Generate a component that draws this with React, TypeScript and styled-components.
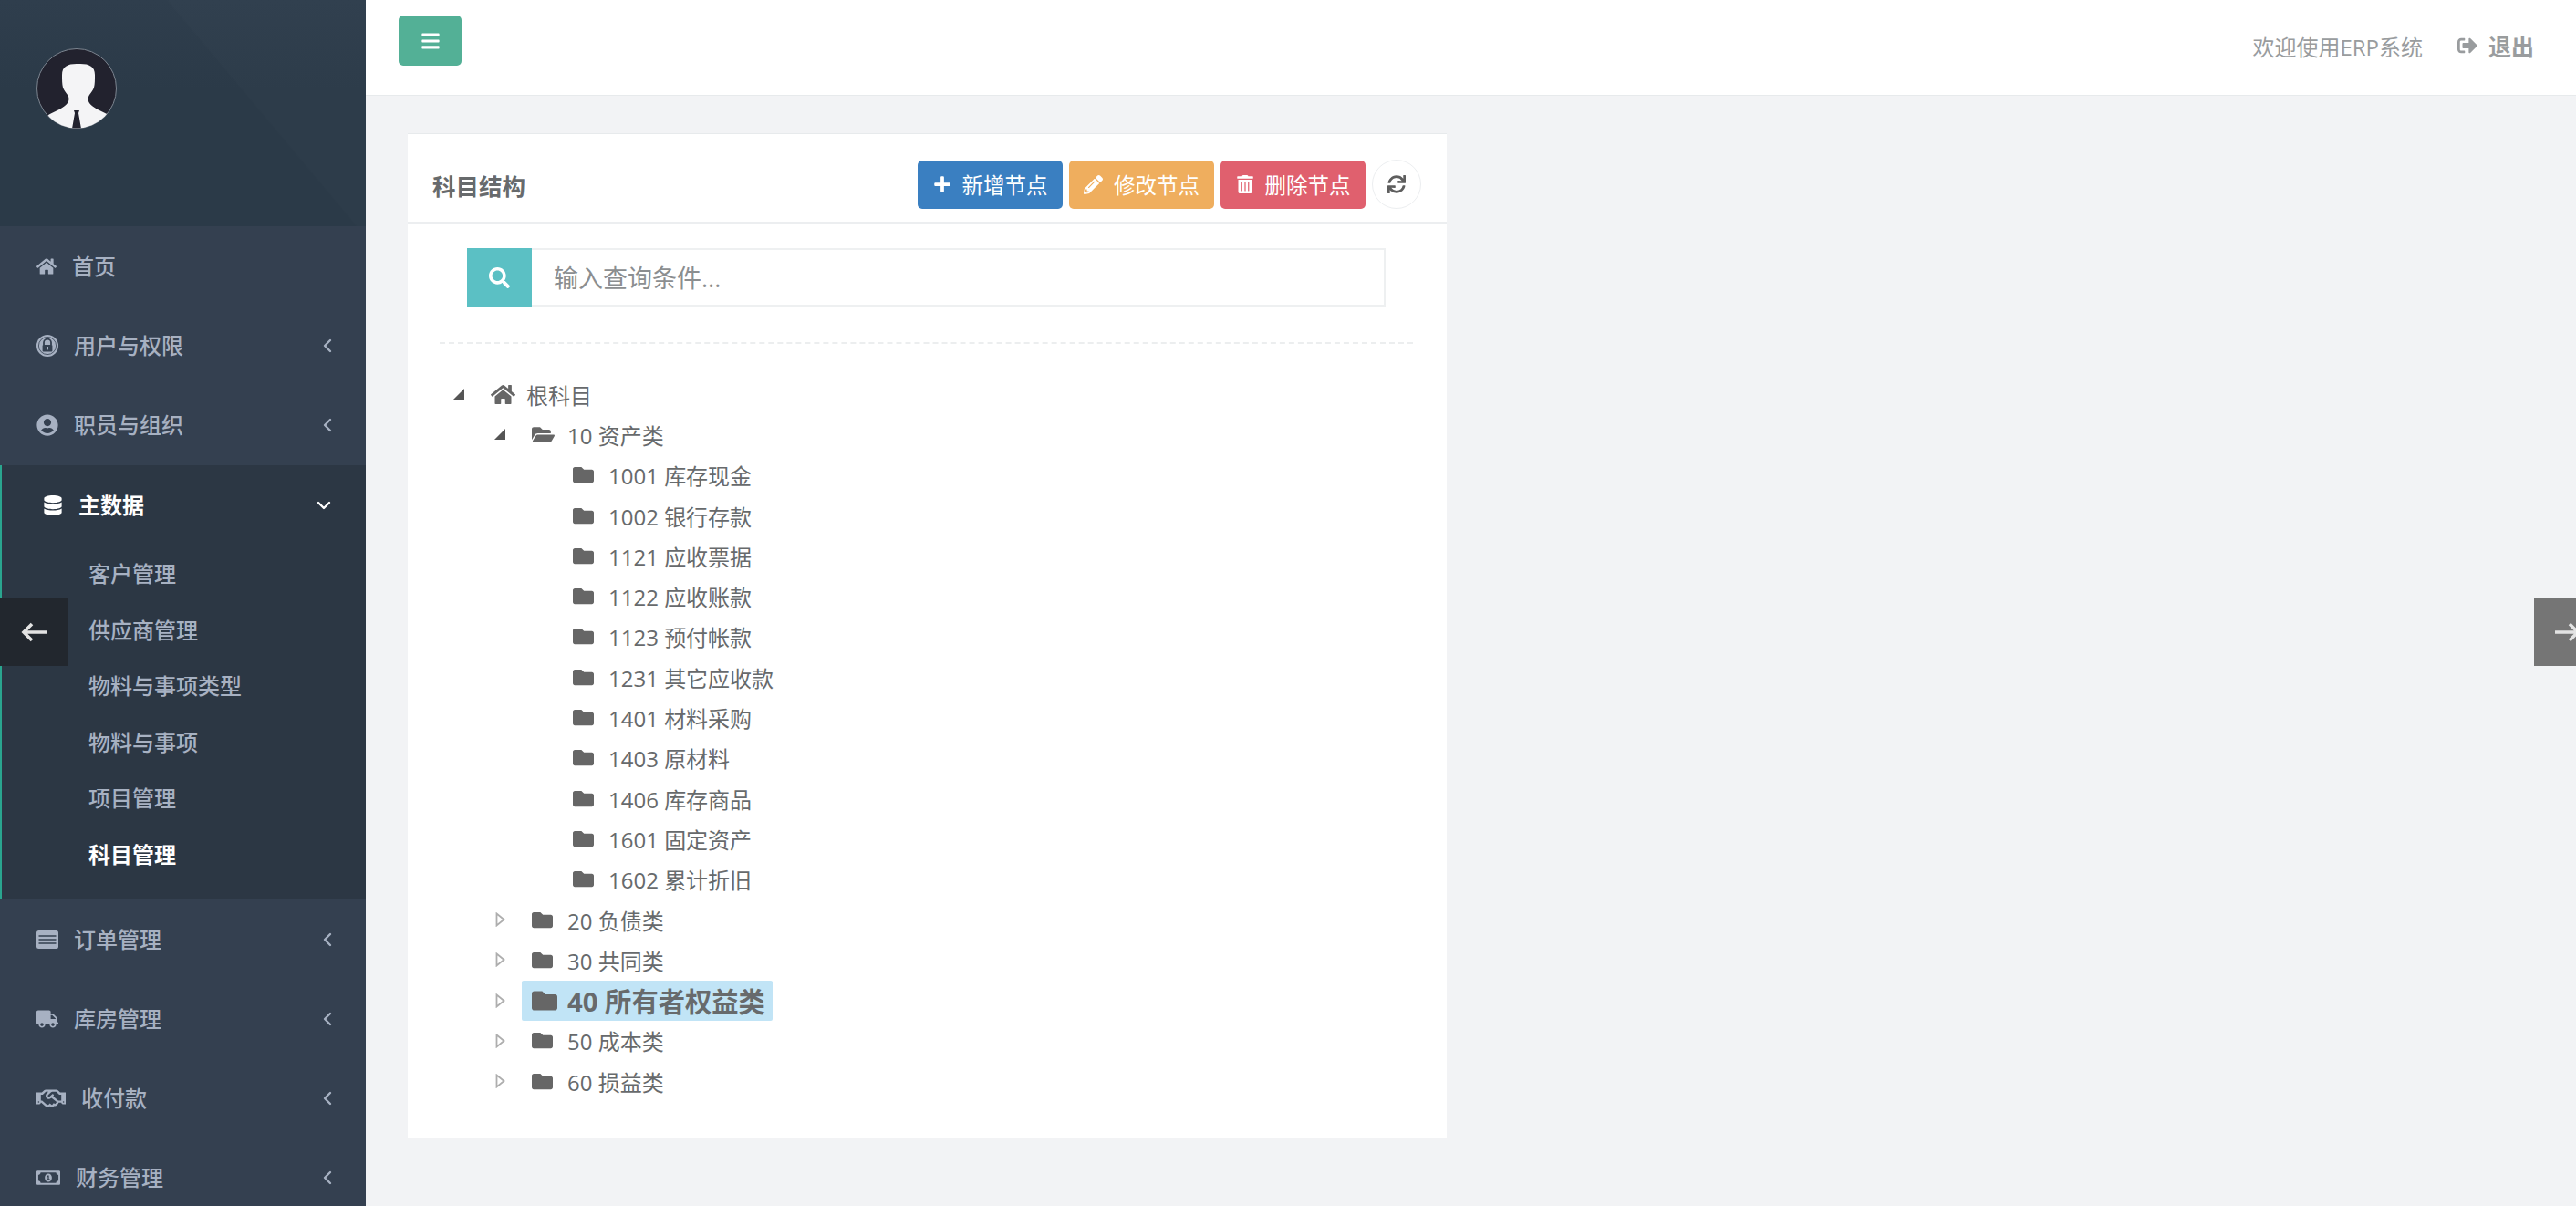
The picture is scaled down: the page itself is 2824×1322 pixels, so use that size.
import React from 'react';
import styled, { createGlobalStyle } from 'styled-components';
import {
  FaBars,
  FaDatabase,
  FaFolder,
  FaFolderOpen,
  FaHome,
  FaPencilAlt,
  FaPlus,
  FaRegHandshake,
  FaRegMoneyBillAlt,
  FaSearch,
  FaSignOutAlt,
  FaSync,
  FaTrashAlt,
  FaTruck,
  FaUserCircle
} from 'react-icons/fa';
import { ChevronDown, ChevronLeft } from 'lucide-react';

const FONT = '"Open Sans", "Noto Sans CJK SC", sans-serif';

const GlobalStyle = createGlobalStyle`
  html, body {
    margin: 0;
    padding: 0;
    height: 100%;
    overflow: hidden;
    background: #f2f3f5;
    font-family: ${FONT};
  }
  * { box-sizing: border-box; }
`;

// drawn because the icon packages have no such shapes
const LockCircle = () => (
  <svg width="24" height="24" viewBox="0 0 24 24">
    <circle cx="12" cy="12" r="12" fill="#a7b1c2" />
    <circle cx="12" cy="12" r="9.6" fill="none" stroke="#344050" strokeWidth="0.8" />
    <path d="M8 11V8.6a4 4 0 0 1 8 0V11" fill="none" stroke="#344050" strokeWidth="1.8" />
    <rect x="6.6" y="11" width="10.8" height="7.4" rx="1" fill="#344050" />
    <rect x="11" y="13" width="2" height="3.4" fill="#a7b1c2" />
  </svg>
);

const OrderCard = () => (
  <svg width="24" height="20" viewBox="0 0 24 20">
    <rect width="24" height="20" rx="2.5" fill="#a7b1c2" />
    <path d="M2.5 6h19M2.5 10h19M2.5 14h19" stroke="#344050" strokeWidth="1.5" />
  </svg>
);

const Avatar = () => (
  <svg width="88" height="88" viewBox="0 0 88 88">
    <defs>
      <clipPath id="avatar-clip">
        <circle cx="44" cy="44" r="43.5" />
      </clipPath>
    </defs>
    <circle cx="44" cy="44" r="43.5" fill="#22222e" stroke="#7c8590" strokeWidth="1" />
    <g clipPath="url(#avatar-clip)">
      <path
        d="M44 17c-10 0-16 3-16 12 0 6 0 10 1 14 1 3 3 5 5 8 2 3 2 6 0 9-3 5-14 9-21 13-1 2 12 16 33 16s34-14 33-16c-7-4-18-8-21-13-2-3-2-6 0-9 2-3 4-5 5-8 1-4 1-8 1-14 0-9-6-12-16-12z"
        fill="#f4f4f6"
      />
      <path d="M41 68h6l-1 3 3 17H39l3-17z" fill="#22222e" />
    </g>
  </svg>
);

const SlideGlyph = ({ flip }: { flip?: boolean }) => (
  <svg width="28" height="22" viewBox="0 0 28 22" style={flip ? { transform: 'scaleX(-1)' } : undefined}>
    <path d="M28 11H3M12 2 3 11l9 9" fill="none" stroke="#e3e3e3" strokeWidth="3.6" />
  </svg>
);

const Page = styled.div`
  position: relative;
  display: flex;
  width: 2824px;
  height: 1322px;
  overflow: hidden;
  background: #f2f3f5;
`;

const Sidebar = styled.aside`
  flex: 0 0 401px;
  height: 100%;
  background: #344050;
  overflow: hidden;
`;

const Profile = styled.div`
  height: 248px;
  padding: 53px 0 0 40px;
  background:
    linear-gradient(50deg, transparent 64%, rgba(255, 255, 255, 0.012) 64.5%),
    linear-gradient(180deg, #2f3e4d 0%, #2b3a48 40%, #2b3a48 100%);
  svg { display: block; }
`;

const NavRow = styled.div<{ $open?: boolean }>`
  display: flex;
  align-items: center;
  gap: 17px;
  height: 87.3px;
  padding: 0 ${p => (p.$open ? '34px' : '30px')} 0 ${p => (p.$open ? '45px' : '40px')};
  color: ${p => (p.$open ? '#fff' : '#a7b1c2')};
  font-size: 24px;
  font-weight: ${p => (p.$open ? 700 : 500)};
  svg { flex: none; display: block; }
`;

const NavLabel = styled.span`
  flex: 1;
  line-height: 1;
`;

const NavGroup = styled.div`
  height: 476px;
  background: #2c3744;
  border-left: 2px solid #2aa58f;
`;

const SubList = styled.div`
  display: flex;
  flex-direction: column;
  padding-top: 1px;
`;

const SubItem = styled.div<{ $current?: boolean }>`
  height: 61.5px;
  padding-left: 95px;
  line-height: 61.5px;
  font-size: 24px;
  color: ${p => (p.$current ? '#fff' : '#a7b1c2')};
  font-weight: ${p => (p.$current ? 700 : 500)};
`;

const Main = styled.main`
  flex: 1;
  min-width: 0;
  display: flex;
  flex-direction: column;
`;

const TopBar = styled.header`
  flex: 0 0 105px;
  display: flex;
  align-items: flex-start;
  justify-content: space-between;
  padding: 17px 46px 0 36px;
  background: #fff;
  border-bottom: 1px solid #e7eaec;
`;

const MenuButton = styled.button`
  display: flex;
  align-items: center;
  justify-content: center;
  width: 69px;
  height: 55px;
  padding: 0;
  border: 0;
  border-radius: 5px;
  background: #53b096;
  color: #fff;
`;

const TopRight = styled.div`
  display: flex;
  align-items: center;
  height: 66px;
  color: #999c9e;
  font-size: 24px;
`;

const Logout = styled.span`
  display: flex;
  align-items: center;
  gap: 12px;
  margin-left: 38px;
  font-size: 25px;
  font-weight: 700;
`;

const Content = styled.div`
  padding: 41px 0 0 46px;
`;

const Panel = styled.section`
  width: 1139px;
  height: 1101px;
  background: #fff;
  border-top: 1px solid #e7eaec;
`;

const PanelHead = styled.div`
  display: flex;
  align-items: center;
  height: 98px;
  padding: 14px 28px 0 27px;
  border-bottom: 2px solid #eceef0;
`;

const PanelTitle = styled.h2`
  flex: 1;
  margin: 0;
  font-size: 25.5px;
  font-weight: 700;
  color: #676a6c;
`;

const ActionButton = styled.button<{ $bg: string; $w: number; $gap: number }>`
  display: flex;
  align-items: center;
  justify-content: center;
  gap: ${p => p.$gap}px;
  width: ${p => p.$w}px;
  height: 53px;
  margin-right: 7px;
  padding: 0;
  border: 0;
  border-radius: 5px;
  background: ${p => p.$bg};
  color: #fff;
  font-family: ${FONT};
  font-size: 23.5px;
  white-space: nowrap;
`;

const RoundButton = styled.button`
  display: flex;
  align-items: center;
  justify-content: center;
  width: 54px;
  height: 54px;
  padding: 0;
  border: 1px solid #eceef0;
  border-radius: 50%;
  background: #fff;
  color: #5e5e5e;
`;

const SearchRow = styled.div`
  display: flex;
  width: 1007px;
  height: 64px;
  margin: 27px 0 0 65px;
`;

const SearchAddon = styled.span`
  flex: 0 0 71px;
  display: flex;
  align-items: center;
  justify-content: center;
  background: #5bc0c4;
  color: #fff;
`;

const SearchInput = styled.input`
  flex: 1;
  min-width: 0;
  padding: 0 24px;
  border: 2px solid #eef0f1;
  border-left: 0;
  outline: none;
  font-family: ${FONT};
  font-size: 27px;
  &::placeholder { color: #8b8e90; opacity: 1; }
`;

const Dashed = styled.div`
  width: 1067px;
  margin: 39px 0 0 35px;
  border-top: 2px dashed #eceeef;
`;

const Tree = styled.ul`
  list-style: none;
  margin: 33px 0 0 44px;
  padding: 0;
`;

const TreeRow = styled.li<{ $level: number }>`
  display: flex;
  align-items: center;
  height: 44.3px;
  padding-left: ${p => p.$level * 45}px;
  font-size: 24px;
  color: #676a6c;
  white-space: nowrap;
`;

const Toggle = styled.span`
  flex: 0 0 46px;
  display: flex;
  align-items: center;
  padding-left: 6px;
  svg { display: block; }
`;

const TreeNode = styled.span<{ $selected?: boolean }>`
  display: flex;
  align-items: center;
  height: 44px;
  margin-left: ${p => (p.$selected ? '-10px' : '0')};
  padding: ${p => (p.$selected ? '0 8px 0 10px' : '0')};
  border-radius: 2px;
  background: ${p => (p.$selected ? '#c1e4f6' : 'transparent')};
  font-size: ${p => (p.$selected ? '29.3px' : '24px')};
  font-weight: ${p => (p.$selected ? 700 : 400)};
`;

const NodeIcon = styled.span`
  flex: 0 0 40px;
  display: flex;
  align-items: center;
  padding-left: 1px;
  color: #666;
  svg { display: block; }
`;

const SlideArrow = styled.div<{ $side: 'left' | 'right' }>`
  position: absolute;
  top: 655px;
  ${p => (p.$side === 'left' ? 'left: 0;' : 'right: -28px;')}
  display: flex;
  align-items: center;
  justify-content: center;
  width: 74px;
  height: 75px;
  background: ${p => (p.$side === 'left' ? '#22272e' : '#757575')};
`;

const navTop = [
  { label: '首页', icon: <FaHome size={22} /> },
  { label: '用户与权限', icon: <LockCircle />, more: true },
  { label: '职员与组织', icon: <FaUserCircle size={24} />, more: true }
];

const navBottom = [
  { label: '订单管理', icon: <OrderCard />, more: true },
  { label: '库房管理', icon: <FaTruck size={24} />, more: true },
  { label: '收付款', icon: <FaRegHandshake size={32} />, more: true },
  { label: '财务管理', icon: <FaRegMoneyBillAlt size={26} />, more: true }
];

const subItems = ['客户管理', '供应商管理', '物料与事项类型', '物料与事项', '项目管理', '科目管理'];

type Node = { text: string; level: number; kind: 'root' | 'open' | 'closed' | 'leaf'; selected?: boolean };

const leaves = [
  '1001 库存现金',
  '1002 银行存款',
  '1121 应收票据',
  '1122 应收账款',
  '1123 预付帐款',
  '1231 其它应收款',
  '1401 材料采购',
  '1403 原材料',
  '1406 库存商品',
  '1601 固定资产',
  '1602 累计折旧'
];

const treeNodes: Node[] = [
  { text: '根科目', level: 0, kind: 'root' },
  { text: '10 资产类', level: 1, kind: 'open' },
  ...leaves.map((text): Node => ({ text, level: 2, kind: 'leaf' })),
  { text: '20 负债类', level: 1, kind: 'closed' },
  { text: '30 共同类', level: 1, kind: 'closed' },
  { text: '40 所有者权益类', level: 1, kind: 'closed', selected: true },
  { text: '50 成本类', level: 1, kind: 'closed' },
  { text: '60 损益类', level: 1, kind: 'closed' }
];

const TriangleOpen = () => (
  <svg width="12" height="12" viewBox="0 0 12 12">
    <path d="M12 0v12H0z" fill="#555" />
  </svg>
);

const TriangleClosed = () => (
  <svg width="12" height="16" viewBox="0 0 12 16">
    <path d="M2.5 1.5 10.5 8l-8 6.5z" fill="none" stroke="#aeaeae" strokeWidth="1.8" />
  </svg>
);

const nodeIcon = (node: Node) => {
  if (node.kind === 'root') return <FaHome size={27} />;
  if (node.kind === 'open') return <FaFolderOpen size={25} />;
  return <FaFolder size={node.selected ? 28 : 23} />;
};

const App = () => {
  return (
    <Page>
      <GlobalStyle />
      <Sidebar>
        <Profile>
          <Avatar />
        </Profile>
        {navTop.map(item => (
          <NavRow key={item.label}>
            {item.icon}
            <NavLabel>{item.label}</NavLabel>
            {item.more && <ChevronLeft size={24} strokeWidth={2.4} />}
          </NavRow>
        ))}
        <NavGroup>
          <NavRow $open>
            <FaDatabase size={22} />
            <NavLabel>主数据</NavLabel>
            <ChevronDown size={24} strokeWidth={2.4} />
          </NavRow>
          <SubList>
            {subItems.map((label, index) => (
              <SubItem key={label} $current={index === subItems.length - 1}>
                {label}
              </SubItem>
            ))}
          </SubList>
        </NavGroup>
        {navBottom.map(item => (
          <NavRow key={item.label}>
            {item.icon}
            <NavLabel>{item.label}</NavLabel>
            <ChevronLeft size={24} strokeWidth={2.4} />
          </NavRow>
        ))}
      </Sidebar>
      <Main>
        <TopBar>
          <MenuButton>
            <FaBars size={22} />
          </MenuButton>
          <TopRight>
            <span>欢迎使用ERP系统</span>
            <Logout>
              <FaSignOutAlt size={22} />
              退出
            </Logout>
          </TopRight>
        </TopBar>
        <Content>
          <Panel>
            <PanelHead>
              <PanelTitle>科目结构</PanelTitle>
              <ActionButton $bg="#3a7fc1" $w={159} $gap={12}>
                <FaPlus size={20} />
                新增节点
              </ActionButton>
              <ActionButton $bg="#efae5e" $w={159} $gap={12}>
                <FaPencilAlt size={21} />
                修改节点
              </ActionButton>
              <ActionButton $bg="#e0606e" $w={159} $gap={12}>
                <FaTrashAlt size={20} />
                删除节点
              </ActionButton>
              <RoundButton>
                <FaSync size={20} />
              </RoundButton>
            </PanelHead>
            <SearchRow>
              <SearchAddon>
                <FaSearch size={23} />
              </SearchAddon>
              <SearchInput placeholder="输入查询条件..." />
            </SearchRow>
            <Dashed />
            <Tree>
              {treeNodes.map(node => (
                <TreeRow key={node.text} $level={node.level}>
                  <Toggle>
                    {(node.kind === 'root' || node.kind === 'open') && <TriangleOpen />}
                    {node.kind === 'closed' && <TriangleClosed />}
                  </Toggle>
                  <TreeNode $selected={node.selected}>
                    <NodeIcon>{nodeIcon(node)}</NodeIcon>
                    {node.text}
                  </TreeNode>
                </TreeRow>
              ))}
            </Tree>
          </Panel>
        </Content>
      </Main>
      <SlideArrow $side="left">
        <SlideGlyph />
      </SlideArrow>
      <SlideArrow $side="right">
        <SlideGlyph flip />
      </SlideArrow>
    </Page>
  );
};

export default App;
